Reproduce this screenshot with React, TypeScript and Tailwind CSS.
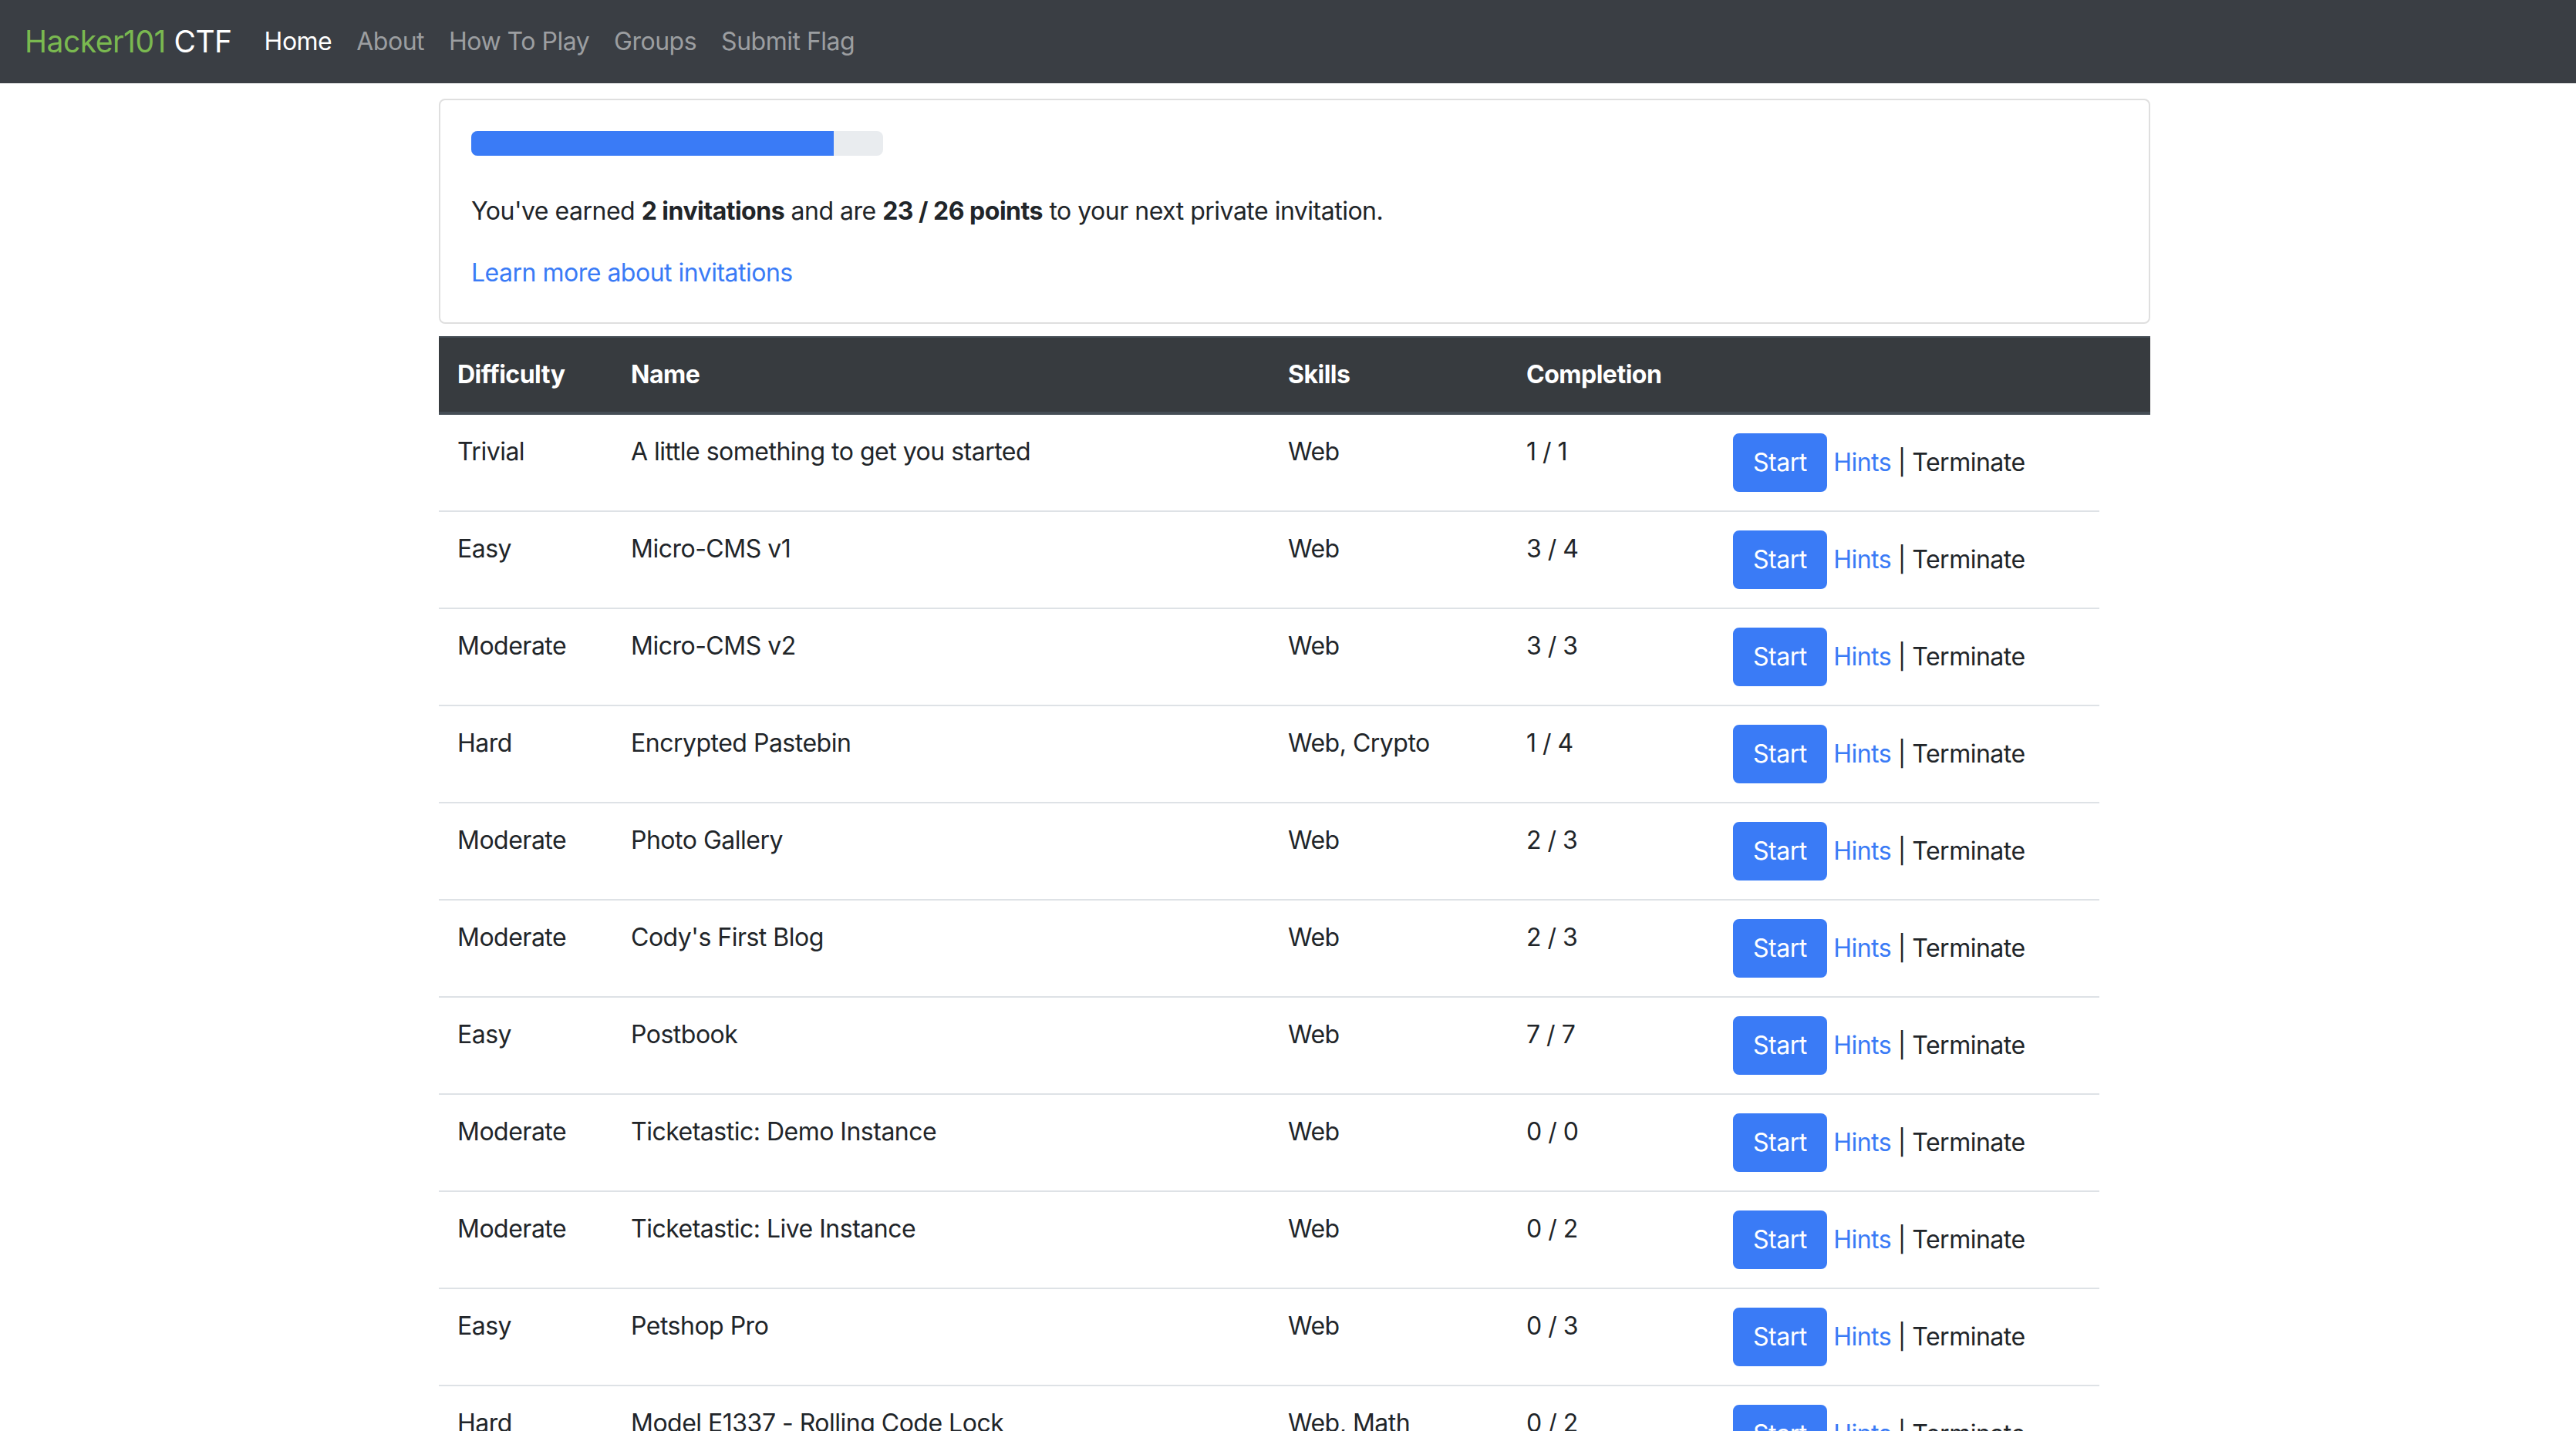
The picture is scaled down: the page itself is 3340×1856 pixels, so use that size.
const navLinks = [
  { label: 'Home', active: true },
  { label: 'About' },
  { label: 'How To Play' },
  { label: 'Groups' },
  { label: 'Submit Flag' },
];

const levels = [
  ['Trivial', 'A little something to get you started', 'Web', '1 / 1'],
  ['Easy', 'Micro-CMS v1', 'Web', '3 / 4'],
  ['Moderate', 'Micro-CMS v2', 'Web', '3 / 3'],
  ['Hard', 'Encrypted Pastebin', 'Web, Crypto', '1 / 4'],
  ['Moderate', 'Photo Gallery', 'Web', '2 / 3'],
  ['Moderate', "Cody's First Blog", 'Web', '2 / 3'],
  ['Easy', 'Postbook', 'Web', '7 / 7'],
  ['Moderate', 'Ticketastic: Demo Instance', 'Web', '0 / 0'],
  ['Moderate', 'Ticketastic: Live Instance', 'Web', '0 / 2'],
  ['Easy', 'Petshop Pro', 'Web', '0 / 3'],
  ['Hard', 'Model E1337 - Rolling Code Lock', 'Web, Math', '0 / 2'],
  ['Moderate', 'TempImage', 'Web', '0 / 2'],
  ['Easy', 'H1 Thermostat', 'Android', '0 / 2'],
];

export default function App() {
  return (
    <div className="min-h-screen bg-white font-['Inter',sans-serif] text-[32px] leading-[48px] tracking-[-0.5px] text-[#212529]">
      {/* Navbar */}
      <nav className="flex h-[108px] items-center bg-[#3a3e44] px-[32px]">
        <a className="mr-[26px] text-[39px] leading-[60px]">
          <span className="text-[#7ab950]">Hacker101</span>{' '}
          <span className="text-white">CTF</span>
        </a>
        <ul className="flex">
          {navLinks.map((l) => (
            <li key={l.label}>
              <a className={`px-[16px] ${l.active ? 'text-white' : 'text-[#9c9ea1]'}`}>{l.label}</a>
            </li>
          ))}
        </ul>
      </nav>

      <div className="ml-[569px] w-[2219px]">
        {/* Invitation card */}
        <div className="mt-[20px] rounded-[8px] border-2 border-[#dfdfdf] p-[40px]">
          <div className="flex h-[32px] w-[534px] overflow-hidden rounded-[8px] bg-[#e9ecef]">
            <div className="h-full w-[470px] bg-[#3a7bf6]" />
          </div>
          <p className="mt-[48px]">
            You've earned <b>2 invitations</b> and are <b>23 / 26 points</b> to your next private invitation.
          </p>
          <p className="mt-[32px]">
            <a className="text-[#3a7bf6]">Learn more about invitations</a>
          </p>
        </div>

        {/* Levels table */}
        <table className="mt-[16px] w-full table-fixed border-collapse">
          <colgroup>
            <col className="w-[225px]" />
            <col className="w-[852px]" />
            <col className="w-[309px]" />
            <col className="w-[268px]" />
            <col className="w-[499px]" />
            <col className="w-[66px]" />
          </colgroup>
          <thead>
            <tr className="bg-[#373b3f] text-left font-bold text-white">
              {['Difficulty', 'Name', 'Skills', 'Completion', '', ''].map((h, i) => (
                <th key={i} className="border-t-2 border-b-4 border-[#454d55] px-[24px] py-[24px] align-bottom">
                  {h}
                </th>
              ))}
            </tr>
          </thead>
          <tbody>
            {levels.map((row, i) => (
              <tr key={i}>
                {row.map((cell, j) => (
                  <td key={j} className="border-t-2 border-[#dee2e6] px-[24px] py-[24px] align-top">
                    {cell}
                  </td>
                ))}
                <td className="border-t-2 border-[#dee2e6] px-[24px] py-[24px] align-top">
                  <button className="h-[76px] rounded-[8px] border-2 border-[#3a7bf6] bg-[#3a7bf6] px-[24px] text-white">
                    Start
                  </button>{' '}
                  <a className="text-[#3a7bf6]">Hints</a> | <a>Terminate</a>
                </td>
              </tr>
            ))}
          </tbody>
        </table>
      </div>
    </div>
  );
}
